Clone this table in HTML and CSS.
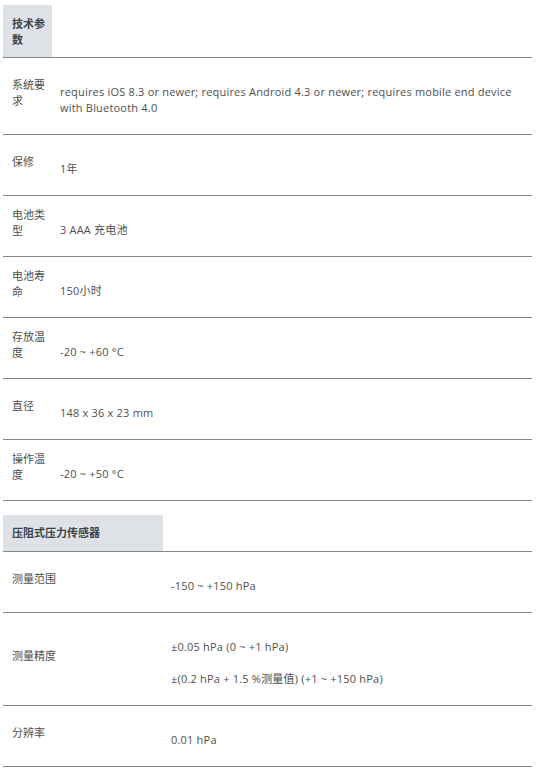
FILE: index.html
```html
<!DOCTYPE html>
<html lang="zh">
<head>
<meta charset="utf-8">
<title>技术参数</title>
<link rel="stylesheet" href="styles.css">
</head>
<body>
<main class="specs">
  <section class="spec-table spec-table--narrow">
    <div class="spec-head"><h3 class="spec-title">技术参数</h3></div>
    <div class="spec-row">
      <div class="spec-label">系统要求</div>
      <div class="spec-value"><p>requires iOS 8.3 or newer; requires Android 4.3 or newer; requires mobile end device with Bluetooth 4.0</p></div>
    </div>
    <div class="spec-row">
      <div class="spec-label">保修</div>
      <div class="spec-value"><p>1年</p></div>
    </div>
    <div class="spec-row">
      <div class="spec-label">电池类型</div>
      <div class="spec-value"><p>3 AAA 充电池</p></div>
    </div>
    <div class="spec-row">
      <div class="spec-label">电池寿命</div>
      <div class="spec-value"><p>150小时</p></div>
    </div>
    <div class="spec-row">
      <div class="spec-label">存放温度</div>
      <div class="spec-value"><p>-20 ~ +60 °C</p></div>
    </div>
    <div class="spec-row">
      <div class="spec-label">直径</div>
      <div class="spec-value"><p>148 x 36 x 23 mm</p></div>
    </div>
    <div class="spec-row">
      <div class="spec-label">操作温度</div>
      <div class="spec-value"><p>-20 ~ +50 °C</p></div>
    </div>
  </section>

  <section class="spec-table spec-table--wide">
    <div class="spec-head"><h3 class="spec-title">压阻式压力传感器</h3></div>
    <div class="spec-row">
      <div class="spec-label">测量范围</div>
      <div class="spec-value"><p>-150 ~ +150 hPa</p></div>
    </div>
    <div class="spec-row">
      <div class="spec-label">测量精度</div>
      <div class="spec-value"><p>±0.05 hPa (0 ~ +1 hPa)</p><p>±(0.2 hPa + 1.5 %测量值) (+1 ~ +150 hPa)</p></div>
    </div>
    <div class="spec-row">
      <div class="spec-label">分辨率</div>
      <div class="spec-value"><p>0.01 hPa</p></div>
    </div>
  </section>
</main>
</body>
</html>
```

FILE: styles.css
```css
html, body {
  margin: 0;
  padding: 0;
  background: #ffffff;
}

body {
  font-family: "Open Sans", "Noto Sans CJK SC", sans-serif;
  font-size: 11px;
  line-height: 16px;
  color: #4f4f4f;
}

.specs {
  width: 529px;
  padding: 5px 0 0 3px;
}

.spec-table {
  --label-col: 49px;
  display: flex;
  flex-direction: column;
}

.spec-table--narrow {
  --label-col: 49px;
}

.spec-table--wide {
  --label-col: 160px;
  margin-top: 14px;
}

.spec-head {
  display: flex;
  border-bottom: 1px solid #7f8990;
}

.spec-title {
  margin: 0;
  width: var(--label-col);
  box-sizing: border-box;
  padding: 10px 7px 10px 9px;
  background: #dee2e6;
  font-size: 11px;
  font-weight: 700;
  line-height: 16px;
  color: #3c454d;
}

.spec-table--narrow .spec-title {
  padding: 11px 7px 9px 9px;
}

.spec-row {
  display: flex;
  align-items: center;
  border-bottom: 1px solid #7f8990;
}

.spec-label {
  flex: 0 0 var(--label-col);
  box-sizing: border-box;
  padding: 0 7px 7px 9px;
}

.spec-value {
  flex: 1 1 auto;
  min-width: 0;
  padding: 26px 8px 18px;
  display: flex;
  flex-direction: column;
  gap: 16px;
  letter-spacing: 0.2px;
}

.spec-value p {
  margin: 0;
}
```
